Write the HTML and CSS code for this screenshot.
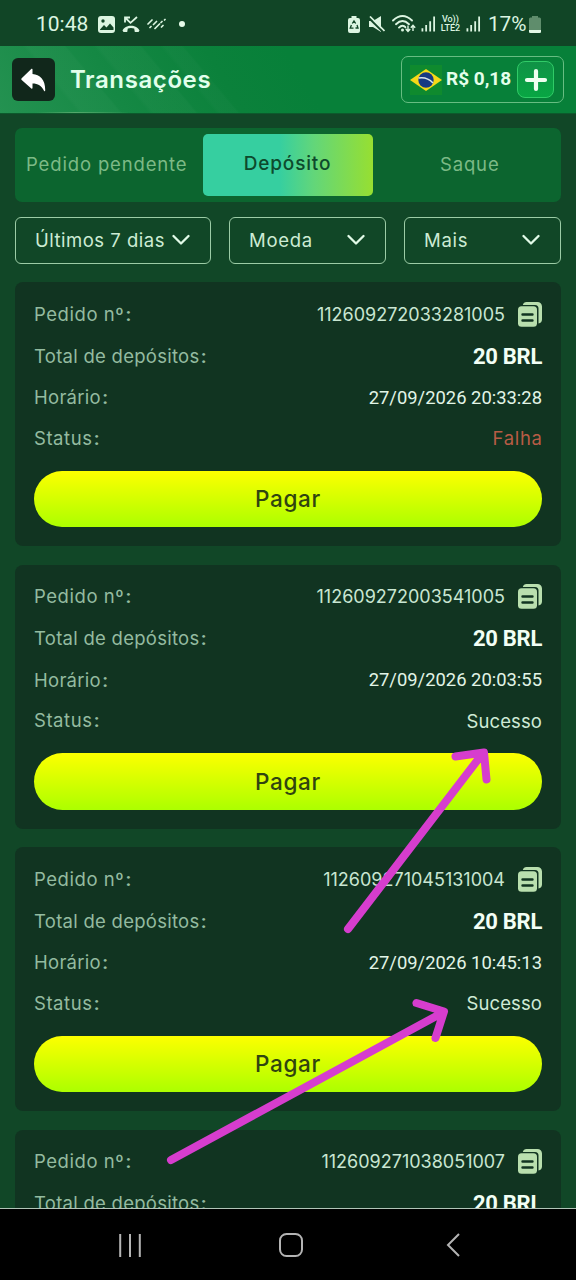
FILE: index.html
```html
<!DOCTYPE html>
<html lang="pt-BR">
<head>
<meta charset="utf-8">
<title>Transações</title>
<link rel="stylesheet" href="styles.css">
</head>
<body>
<svg class="defs" aria-hidden="true">
  <symbol id="copy" viewBox="0 0 24 25">
    <path d="M8.500 0H19.500a4.500 4.500 0 0 1 4.500 4.500V17.500a4.200 4.200 0 0 1-3.500 4V6.500a3.500 3.500 0 0 0-3.500-3.500H4.800A4 4 0 0 1 8.500 0Z" fill="#b9dfae"/>
    <rect x="0" y="4.200" width="19" height="20.500" rx="3.500" fill="#b9dfae"/>
    <path d="M4.500 12.500H14.500M4.500 18.500H14.500" stroke="#113421" stroke-width="2.400" stroke-linecap="round"/>
  </symbol>
  <symbol id="chevron" viewBox="0 0 18 12">
    <path d="M1.500 2 9 9.500 16.500 2" fill="none" stroke="#e2fbe8" stroke-width="2.300" stroke-linecap="round" stroke-linejoin="round"/>
  </symbol>
  <symbol id="signal" viewBox="0 0 16 16">
    <path d="M1.500 12.500V16M5.500 9V16M9.800 5V16M14 0V16" stroke="#dcf5e1" stroke-width="1.900"/>
  </symbol>
</svg>

<div class="phone">
  <div class="statusbar">
    <div class="status-left">
      <span class="clock">10:48</span>
      <svg class="ic-image" viewBox="0 0 17 17"><rect width="17" height="17" rx="3" fill="#dcf5e1"/><circle cx="5" cy="5" r="1.700" fill="#114526"/><path d="M2 13.500 6 9l2.500 2.500L12 7.500l3.500 4v2.500H2Z" fill="#114526"/></svg>
      <svg class="ic-missed" viewBox="0 0 18 17"><path d="M3 6.500V1.500H8M3.500 2 8.500 6.800 15 1" fill="none" stroke="#dcf5e1" stroke-width="1.800"/><path d="M0.500 14.500C3 8 15 8 17.500 14.500L16.500 16H12.800L12.200 12.500Q9 11.500 5.800 12.500L5.200 16H1.500Z" fill="#dcf5e1"/></svg>
      <svg class="ic-rain" viewBox="0 0 19 12"><path d="M1 6 5 2M3 9.500 4 8.500M6.500 6.500 9.500 3.500M8 10.500 12.500 6M14 4.500 15 3.500M14.500 9 16 7.500M17.500 2 18 1.500" stroke="#dcf5e1" stroke-width="1.700" stroke-linecap="round"/></svg>
      <span class="dot"></span>
    </div>
    <div class="status-right">
      <svg class="ic-saver" viewBox="0 0 12 17"><path d="M3.500 0h5v2H10a2 2 0 0 1 2 2V15a2 2 0 0 1-2 2H2a2 2 0 0 1-2-2V4a2 2 0 0 1 2-2H3.500Z" fill="#dcf5e1"/><path d="M4.300 7.500 6 5 7.700 7.500M9 9 10 12H7.500M5.500 12.200H2.200L3.400 9" fill="none" stroke="#114526" stroke-width="1.300"/></svg>
      <svg class="ic-mute" viewBox="0 0 16 16"><path d="M0 5H4L12 0V16L4 11H0Z" fill="#dcf5e1"/><path d="M0 2 14 16" stroke="#114526" stroke-width="2"/><path d="M1 0.500 15.500 15" stroke="#dcf5e1" stroke-width="1.700"/></svg>
      <svg class="ic-wifi" viewBox="0 0 24 18"><path d="M1 5.500Q10.500-3.500 20 5.500M4 9.200Q10.500 3 17 9.200M7 12.600Q10.500 9 14 12.600" fill="none" stroke="#dcf5e1" stroke-width="1.900" stroke-linecap="round"/><circle cx="10.500" cy="15" r="1.500" fill="#dcf5e1"/><path d="M16 10.500V16M13.800 14 16 16.500 18.200 14M21 16V10.500M18.800 12.800 21 10.300 23.200 12.800" fill="none" stroke="#114526" stroke-width="3.500"/><path d="M16 10.500V16M13.800 14 16 16.500 18.200 14M21 16V10.500M18.800 12.800 21 10.300 23.200 12.800" fill="none" stroke="#dcf5e1" stroke-width="1.400"/></svg>
      <svg class="ic-signal"><use href="#signal"/></svg>
      <span class="volte"><span>Vo))</span><span>LTE2</span></span>
      <svg class="ic-signal"><use href="#signal"/></svg>
      <span class="percent">17%</span>
      <svg class="ic-battery" viewBox="0 0 12 17"><path d="M3 0h6v1.500h1.500A1.500 1.500 0 0 1 12 3V15.500a1.500 1.500 0 0 1-1.500 1.500h-9A1.500 1.500 0 0 1 0 15.500V3A1.500 1.500 0 0 1 1.500 1.500H3Z" fill="#5f8d6c"/><path d="M0 14H12V15.500a1.500 1.500 0 0 1-1.500 1.500h-9A1.500 1.500 0 0 1 0 15.500Z" fill="#e2f8e6"/></svg>
    </div>
  </div>

  <header class="header">
    <button class="back" aria-label="Voltar"><svg viewBox="0 0 25 24"><path d="M0.700 10.200 10.500 0.800Q11.500 0.300 11.500 1.500V6C19 6.500 24.500 12 24.200 22.500Q24 24 23 22.800C20.500 17.500 17 15.500 11.500 15.500V20Q11.300 21.300 10.300 20.500L0.700 12Q-0.200 11 0.700 10.200Z" fill="#fff"/></svg></button>
    <h1 class="title">Transações</h1>
    <div class="wallet">
      <svg class="flag" viewBox="0 0 32 30"><rect width="32" height="30" fill="#0f8a2e"/><path d="M16 4 32 15 16 26 0 15Z" fill="#f7d917"/><circle cx="16" cy="15" r="7.700" fill="#173a83"/><path d="M8.600 13Q17 11.500 23 18" fill="none" stroke="#d9e6ea" stroke-width="1.500"/></svg>
      <span class="balance">R$ 0,18</span>
      <button class="plus" aria-label="Adicionar"><svg viewBox="0 0 24 24"><path d="M12 3V21M3 12H21" stroke="#effff0" stroke-width="4.200" stroke-linecap="round"/></svg></button>
    </div>
  </header>

  <main class="content">
    <nav class="tabs">
      <span class="tab">Pedido pendente</span>
      <span class="tab active">Depósito</span>
      <span class="tab last">Saque</span>
    </nav>
    <div class="filters">
      <div class="select period"><span>Últimos 7 dias</span><svg><use href="#chevron"/></svg></div>
      <div class="select"><span>Moeda</span><svg><use href="#chevron"/></svg></div>
      <div class="select"><span>Mais</span><svg><use href="#chevron"/></svg></div>
    </div>

    <section class="card">
      <div class="row"><span class="label wide">Pedido nº<i>:</i></span><span class="order">112609272033281005<svg><use href="#copy"/></svg></span></div>
      <div class="row"><span class="label">Total de depósitos<i>:</i></span><b class="amount">20 BRL</b></div>
      <div class="row time"><span class="label">Horário<i>:</i></span><span class="date">27/09/2026 20:33:28</span></div>
      <div class="row state"><span class="label wide">Status<i>:</i></span><span class="failed">Falha</span></div>
      <button class="pay">Pagar</button>
    </section>

    <section class="card">
      <div class="row"><span class="label wide">Pedido nº<i>:</i></span><span class="order">112609272003541005<svg><use href="#copy"/></svg></span></div>
      <div class="row"><span class="label">Total de depósitos<i>:</i></span><b class="amount">20 BRL</b></div>
      <div class="row time"><span class="label">Horário<i>:</i></span><span class="date">27/09/2026 20:03:55</span></div>
      <div class="row state"><span class="label wide">Status<i>:</i></span><span class="success">Sucesso</span></div>
      <button class="pay">Pagar</button>
    </section>

    <section class="card">
      <div class="row"><span class="label wide">Pedido nº<i>:</i></span><span class="order">112609271045131004<svg><use href="#copy"/></svg></span></div>
      <div class="row"><span class="label">Total de depósitos<i>:</i></span><b class="amount">20 BRL</b></div>
      <div class="row time"><span class="label">Horário<i>:</i></span><span class="date">27/09/2026 10:45:13</span></div>
      <div class="row state"><span class="label wide">Status<i>:</i></span><span class="success">Sucesso</span></div>
      <button class="pay">Pagar</button>
    </section>

    <section class="card">
      <div class="row"><span class="label wide">Pedido nº<i>:</i></span><span class="order">112609271038051007<svg><use href="#copy"/></svg></span></div>
      <div class="row"><span class="label">Total de depósitos<i>:</i></span><b class="amount">20 BRL</b></div>
    </section>
  </main>

  <footer class="navbar">
    <svg class="nav-recents" viewBox="0 0 22 23"><path d="M1.200 0V23M11 0V23M20.800 0V23" stroke="#b4b4b4" stroke-width="2"/></svg>
    <svg class="nav-home" viewBox="0 0 24 24"><rect x="1" y="1" width="22" height="22" rx="6.500" fill="none" stroke="#b4b4b4" stroke-width="2"/></svg>
    <svg class="nav-back" viewBox="0 0 14 24"><path d="M13 1 2 12 13 23" fill="none" stroke="#b4b4b4" stroke-width="2"/></svg>
  </footer>

  <svg class="arrows" viewBox="0 0 576 1280">
    <path d="M348 929 483 753M455.500 756.500 484 752.500 486.500 779.500M171 1160 442 1013M416.500 1003 444 1011.500 435.500 1038"/>
  </svg>
</div>
</body>
</html>
```
FILE: styles.css
```css
* { box-sizing: border-box; }
body { margin: 0; background: #114727; font-family: Inter, "Noto Sans", sans-serif; }
svg { display: block; flex: none; }
button { border: 0; padding: 0; font: inherit; }
.defs { position: absolute; width: 0; height: 0; }

.phone { position: relative; width: 576px; height: 1280px; overflow: hidden; display: flex; flex-direction: column; }

.statusbar { flex: none; height: 46px; padding: 2px 35.500px 0 36px; display: flex; justify-content: space-between; background: #114526; color: #dcf5e1; font: 20.800px/42px Roboto, sans-serif; }
.status-left, .status-right { display: flex; align-items: center; }
.clock { width: 62px; font-size: 21px; }
.ic-image { width: 17px; height: 17px; }
.ic-missed { width: 18px; height: 17px; margin-left: 7px; }
.ic-rain { width: 19px; height: 12px; margin-left: 7px; }
.dot { width: 6px; height: 6px; margin-left: 13px; border-radius: 50%; background: #e6fbe9; }
.ic-saver { width: 12px; height: 17px; }
.ic-mute { width: 16px; height: 16px; margin-left: 9px; }
.ic-wifi { width: 24px; height: 18px; margin-left: 7px; }
.ic-signal { width: 15px; height: 16px; margin-left: 5px; }
.volte { display: flex; flex-direction: column; width: 21px; margin-left: 4px; text-align: center; font: 500 9px/9px Roboto, sans-serif; }
.percent { margin-left: 7px; }
.ic-battery { width: 12px; height: 17px; margin-left: 2px; }

.header { flex: none; height: 68px; padding: 0 12px; display: flex; align-items: center; border-bottom: 1px solid #0c5a2c;
  background:
    linear-gradient(90deg, transparent 35px, #55a86c 75px, transparent 130px) bottom / 100% 1px no-repeat,
    linear-gradient(50deg, transparent 60px, rgba(255,255,255,.022) 64px 92px, transparent 94px 114px, rgba(255,255,255,.022) 118px 150px, transparent 152px 165px, rgba(255,255,255,.02) 169px 182px, transparent 184px),
    linear-gradient(60deg, #249251 0, #158844 110px, #0b813b 210px, #078039 280px); }
.back { width: 43px; height: 43px; border-radius: 6px; background: #11271b; display: flex; align-items: center; justify-content: center; }
.back svg { width: 25px; height: 24px; }
.title { margin: 0 0 0 15px; font-size: 24px; font-weight: 600; letter-spacing: .600px; color: #e2ffec; }
.wallet { margin-left: auto; width: 163px; height: 47px; padding: 0 9px 0 8px; display: flex; align-items: center; border: 1px solid #67bd82; border-radius: 7px; }
.flag { width: 32px; height: 30px; }
.balance { margin-left: 4px; margin-top: -3px; white-space: nowrap; font: 700 19px Roboto, sans-serif; color: #e4ffeb; }
.plus { flex: none; width: 37px; height: 37px; margin-left: auto; border: 1px solid #30cb67; border-radius: 8px; background: linear-gradient(#109246, #08a643); display: flex; align-items: center; justify-content: center; }
.plus svg { width: 24px; height: 24px; }

.content { flex: 1; min-height: 0; overflow: hidden; padding: 14px 15px 0; }
.tabs { height: 74px; padding: 6px 0; display: flex; border-radius: 7px; background: #0c652f; font-size: 18.500px; color: #7cba86; }
.tab { width: 187.500px; padding-left: 11px; line-height: 60px; letter-spacing: .850px; }
.tab.active { width: 170px; padding: 0; text-align: center; border-radius: 5px; font-size: 19px; font-weight: 500; color: #0d4a2c; background: linear-gradient(90deg, #36cfa0 0 45%, #62d67a 65%, #97df31 100%); }
.tab.last { width: 188.500px; padding: 0 0 0 6px; text-align: center; }

.filters { margin: 15px 0 18px; display: flex; gap: 18px; }
.select { width: 157px; height: 47px; padding: 0 20px 1px 19px; display: flex; align-items: center; justify-content: space-between; border: 1px solid #9ccca6; border-radius: 6px; font-size: 18.500px; letter-spacing: .700px; white-space: nowrap; color: #cdecd4; }
.select.period { width: 196px; letter-spacing: .500px; }
.select svg { width: 18px; height: 12px; margin-top: -1px; }

.card { height: 264px; margin-bottom: 18.500px; padding: 11px 19px 0; border-radius: 8px; background: #113421; }
.row { height: 42px; display: flex; align-items: center; justify-content: space-between; font-size: 18.500px; }
.row.time { height: 41px; }
.row.state { height: 40px; }
.label { letter-spacing: .270px; color: #94bba0; }
.label.wide { letter-spacing: .550px; }
.label i { margin-left: 1.500px; font: 700 19px Roboto, sans-serif; }
.order { display: flex; align-items: center; font-size: 18px; color: #c9e6d2; }
.order svg { width: 24px; height: 25px; margin-left: 13px; }
.amount { font: 700 22px Roboto, sans-serif; letter-spacing: -.300px; color: #f2fff5; }
.date { margin-top: -1px; font: 18.400px Roboto, sans-serif; color: #e2f5e7; }
.failed { letter-spacing: .700px; margin-right: -.700px; color: #b85c45; }
.success { letter-spacing: .100px; color: #cfead6; }
.pay { display: block; width: 100%; height: 56.500px; margin-top: 12.500px; border-radius: 29px; background: linear-gradient(#fdff00, #acff00); text-align: center; font-size: 22.500px; font-weight: 500; letter-spacing: .700px; color: #304410; }

.navbar { position: relative; flex: none; height: 72px; display: flex; align-items: center; padding: 1px 0 0 119px; border-top: 1px solid #b2c4b8; background: #000; }
.nav-recents { width: 22px; height: 23px; }
.nav-home { width: 24px; height: 24px; margin-left: 138px; }
.nav-back { width: 14px; height: 24px; margin-left: 143px; }

.arrows { position: absolute; inset: 0; width: 576px; height: 1280px; pointer-events: none; }
.arrows path { fill: none; stroke: #d63dce; stroke-width: 8; stroke-linecap: round; stroke-linejoin: round; }
```
